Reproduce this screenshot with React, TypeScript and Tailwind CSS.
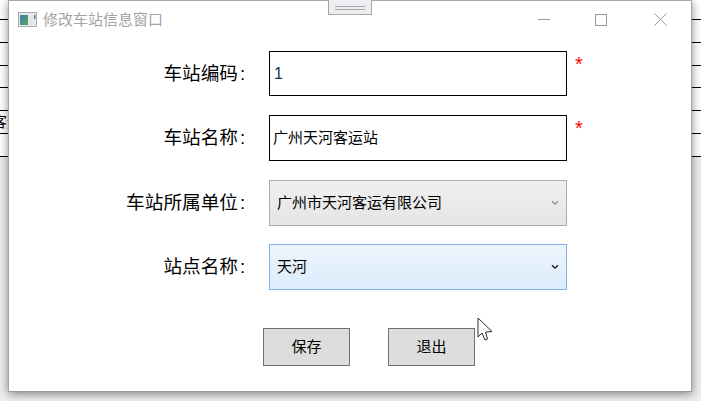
import React from "react";

const rows = ["", "", "", "", "客运站", ""];

function Label({ text }: { text: string }) {
  return (
    <div className="w-[238px] text-right text-[18.67px] leading-[24px] text-black">
      {text}
      <span className="inline-block w-[9px] pl-[2px] text-left">:</span>
    </div>
  );
}

function Star() {
  return <div className="ml-[8px] -mt-[20px] text-[20px] leading-[18px] text-[#ff0000]">*</div>;
}

function Arrow({ color }: { color: string }) {
  return (
    <svg width="8" height="6" viewBox="0 0 8 6" fill="none" className="mr-[7px]">
      <path d="M1 1.2 L4 4.2 L7 1.2" stroke={color} strokeWidth="1.3" />
    </svg>
  );
}

export default function App() {
  return (
    <div className="relative h-[401px] w-[701px] overflow-hidden bg-[#eeeeee] [font-family:'Liberation_Sans','Noto_Sans_CJK_SC',sans-serif]">
      {/* table rows behind the window */}
      <div className="flex flex-col bg-white pt-[19px]">
        {rows.map((r, i) => (
          <div key={i} className="h-[22.8px] border-t border-black">
            {r && <div className="-ml-[8px] text-[15px] leading-[21px] text-black">{r}</div>}
          </div>
        ))}
        <div className="h-px bg-black" />
      </div>

      {/* window */}
      <div className="absolute left-[8px] top-0 flex h-[392px] w-[684px] flex-col border border-[#a6a6a6] border-b-[#9a9a9a] bg-white shadow-[0_2px_9px_rgba(0,0,0,0.45)]">
        <div className="flex h-[50px] items-start">
          <svg width="19" height="15" viewBox="0 0 19 15" className="ml-[9px] mt-[11px]">
            <defs>
              <linearGradient id="ico" x1="0" y1="0" x2="1" y2="1">
                <stop offset="0" stopColor="#3f7fa6" />
                <stop offset="1" stopColor="#5aa765" />
              </linearGradient>
            </defs>
            <rect x="0.5" y="0.5" width="18" height="14" fill="#e6e8ea" stroke="#a9adb0" />
            <rect x="2" y="3" width="8" height="10" fill="url(#ico)" />
            <rect x="11" y="3" width="4" height="10" fill="#e2e6e6" />
            <rect x="16" y="3" width="1.5" height="4" fill="#4f8f78" />
          </svg>
          <div className="ml-[6px] mt-[9px] text-[15px] leading-[20px] text-[#a3a3a3]">修改车站信息窗口</div>
          <div className="ml-auto mt-[12px] flex items-center">
            <div className="h-px w-[12px] bg-[#999999]" />
            <div className="ml-[45px] h-[12px] w-[12px] border border-[#999999]" />
            <svg width="13" height="13" viewBox="0 0 13 13" className="ml-[47px] mr-[24px]">
              <path d="M0.5 0.5 L12.5 12.5 M12.5 0.5 L0.5 12.5" stroke="#999999" strokeWidth="1" fill="none" />
            </svg>
          </div>
        </div>

        <div className="flex flex-col">
          <div className="flex h-[45px] items-center">
            <Label text="车站编码" />
            <div className="ml-[22px] flex h-[45px] w-[298px] items-center border border-black pl-[4px] text-[16px] text-[#10335c]">1</div>
            <Star />
          </div>
          <div className="mt-[19px] flex h-[46px] items-center">
            <Label text="车站名称" />
            <div className="ml-[22px] flex h-[46px] w-[298px] items-center border border-black pl-[3px] pt-[1px] text-[15px] text-black">广州天河客运站</div>
            <Star />
          </div>
          <div className="mt-[19px] flex h-[46px] items-center">
            <Label text="车站所属单位" />
            <div className="ml-[22px] flex h-[46px] w-[298px] items-center justify-between border border-[#acacac] bg-gradient-to-b from-[#f0f0f0] to-[#e5e5e5] pl-[7px] text-[15px] text-black">
              广州市天河客运有限公司
              <Arrow color="#8a8a8a" />
            </div>
          </div>
          <div className="mt-[18px] flex h-[46px] items-center">
            <Label text="站点名称" />
            <div className="ml-[22px] flex h-[46px] w-[298px] items-center justify-between border border-[#7eb4ea] bg-gradient-to-b from-[#ecf4fc] to-[#dcecfc] pl-[7px] text-[15px] text-black">
              天河
              <Arrow color="#111111" />
            </div>
          </div>
        </div>

        <div className="ml-[254px] mt-[38px] flex gap-[38px]">
          <div className="flex h-[38px] w-[87px] items-center justify-center border border-[#707070] bg-[#dddddd] text-[15px] text-black">保存</div>
          <div className="flex h-[38px] w-[87px] items-center justify-center border border-[#707070] bg-[#dddddd] text-[15px] text-black">退出</div>
        </div>
      </div>

      {/* drag handle on top of the window */}
      <div className="absolute left-[328px] top-0 flex h-[15px] w-[44px] flex-col items-center gap-[2px] border border-t-0 border-[#a6a6a6] bg-[#eeeef2] pt-[6px]">
        <div className="h-px w-[30px] bg-[#a6a6a6]" />
        <div className="h-px w-[30px] bg-[#a6a6a6]" />
      </div>

      {/* mouse pointer */}
      <svg width="17" height="25" viewBox="0 0 17 25" className="absolute left-[477px] top-[317px]">
        <path d="M1 1 L1 20 L5 16 L8 23 L10.5 22 L8.5 15.2 L15 14.5 Z" fill="#ffffff" stroke="#2a2a33" strokeWidth="1" />
      </svg>
    </div>
  );
}
